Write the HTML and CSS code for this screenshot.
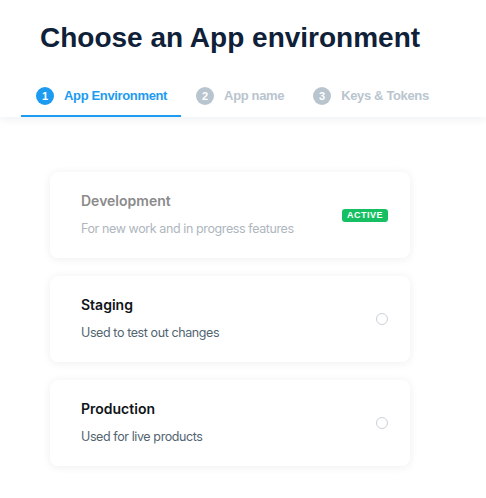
FILE: index.html
```html
<!DOCTYPE html>
<html>
<head>
<meta charset="utf-8">
<link rel="stylesheet" href="styles.css">
</head>
<body>
<header class="header">
  <h1 class="title">Choose an App environment</h1>
  <nav class="tabs">
    <div class="tab tab-active"><span class="step">1</span><span class="tab-label">App Environment</span></div>
    <div class="tab"><span class="step">2</span><span class="tab-label">App name</span></div>
    <div class="tab"><span class="step">3</span><span class="tab-label">Keys &amp; Tokens</span></div>
  </nav>
</header>
<main class="list">
  <div class="card card-disabled">
    <div class="card-text">
      <div class="card-title">Development</div>
      <div class="card-desc">For new work and in progress features</div>
    </div>
    <span class="badge">ACTIVE</span>
  </div>
  <div class="card">
    <div class="card-text">
      <div class="card-title">Staging</div>
      <div class="card-desc">Used to test out changes</div>
    </div>
    <span class="radio"></span>
  </div>
  <div class="card">
    <div class="card-text">
      <div class="card-title">Production</div>
      <div class="card-desc">Used for live products</div>
    </div>
    <span class="radio"></span>
  </div>
</main>
</body>
</html>
```

FILE: styles.css
```css
html, body {
  margin: 0;
  padding: 0;
  background: #ffffff;
}
body {
  font-family: "Liberation Sans", Arial, sans-serif;
  width: 486px;
  height: 498px;
  overflow: hidden;
}
.header {
  background: #fff;
  box-shadow: 0 3px 8px rgba(20, 40, 60, 0.06);
  position: relative;
  z-index: 1;
}
.title {
  margin: 0;
  padding: 21px 0 0 40px;
  font-size: 28px;
  line-height: 34px;
  font-weight: 700;
  color: #0f2138;
  height: 56px;
  box-sizing: border-box;
}
.tabs {
  display: flex;
  padding-left: 21px;
  padding-top: 21px;
}
.tab {
  display: flex;
  align-items: center;
  gap: 10px;
  padding: 10px 14px 10px 15px;
  border-bottom: 2px solid transparent;
  color: #b9c5ce;
  font-size: 13px;
  letter-spacing: -0.35px;
  font-weight: 700;
  line-height: 18px;
}
.step {
  width: 18px;
  height: 18px;
  border-radius: 50%;
  background: #b9c5ce;
  color: #fff;
  font-size: 11px;
  letter-spacing: 0;
  line-height: 18px;
  text-align: center;
  font-weight: 700;
}
.tab-active {
  color: #1d9bf0;
  border-bottom-color: #1d9bf0;
}
.tab-active .step {
  background: #1d9bf0;
}
.list {
  display: flex;
  flex-direction: column;
  gap: 18px;
  padding: 55px 0 0 50px;
}
.card {
  width: 360px;
  height: 86px;
  box-sizing: border-box;
  background: #fff;
  border-radius: 8px;
  box-shadow: 0 1px 8px rgba(20, 40, 60, 0.08);
  display: flex;
  align-items: center;
  justify-content: space-between;
  padding: 0 22px 0 31px;
  font-family: Inter, "Liberation Sans", sans-serif;
}
.card-text {
  display: flex;
  flex-direction: column;
  gap: 8px;
}
.card-title {
  font-size: 14px;
  line-height: 20px;
  font-weight: 600;
  color: #0f1419;
}
.card-desc {
  font-size: 12.5px;
  letter-spacing: -0.4px;
  line-height: 20px;
  color: #536471;
}
.card-disabled .card-title {
  color: #8b8b8b;
}
.card-disabled .card-desc {
  color: #aeb6be;
}
.badge {
  background: #17bf63;
  color: #fff;
  font-family: "Liberation Sans", Arial, sans-serif;
  font-size: 9px;
  font-weight: 700;
  letter-spacing: 0.5px;
  line-height: 13px;
  padding: 0 5px;
  border-radius: 3px;
}
.radio {
  width: 12px;
  height: 12px;
  border-radius: 50%;
  border: 1px solid #c9d2d9;
  box-sizing: border-box;
}
```
